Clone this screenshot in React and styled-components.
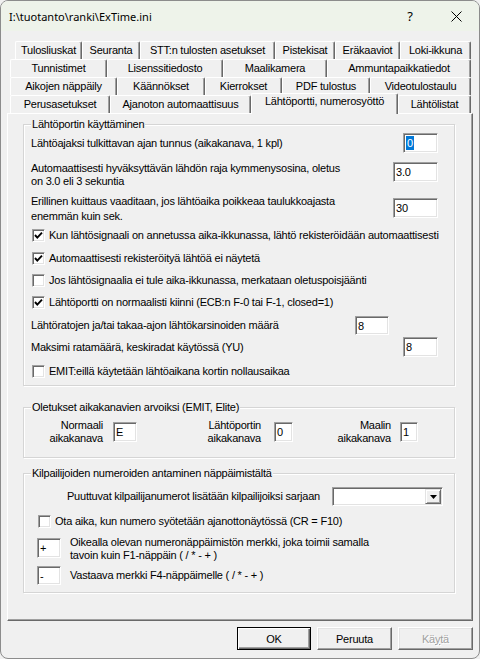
import React from 'react';
import styled, { createGlobalStyle } from 'styled-components';

const GlobalStyle = createGlobalStyle`
  html, body {
    margin: 0;
    padding: 0;
    background: #f0f0f0;
  }
  body {
    font-family: "Liberation Sans", Arial, sans-serif;
    font-size: 11px;
    letter-spacing: -0.22px;
    color: #000;
  }
  * {
    box-sizing: border-box;
  }
`;

const tabRows = [
  {
    indent: 8,
    tabs: [
      ['Tulosliuskat', 67],
      ['Seuranta', 58],
      ['STT:n tulosten asetukset', 135],
      ['Pistekisat', 60],
      ['Eräkaaviot', 65],
      ['Loki-ikkuna', 71],
    ],
  },
  {
    indent: 3,
    tabs: [
      ['Tunnistimet', 97],
      ['Lisenssitiedosto', 116],
      ['Maalikamera', 104],
      ['Ammuntapaikkatiedot', 144],
    ],
  },
  {
    indent: 3,
    tabs: [
      ['Aikojen näppäily', 107],
      ['Käännökset', 88],
      ['Kierrokset', 77],
      ['PDF tulostus', 88],
      ['Videotulostaulu', 101],
    ],
  },
  {
    indent: 3,
    tabs: [
      ['Perusasetukset', 100],
      ['Ajanoton automaattisuus', 141],
      ['Lähtöportti, numerosyöttö', 147, true],
      ['Lähtölistat', 73],
    ],
  },
];

const CheckMark = () => (
  <svg width="11" height="11" viewBox="0 0 11 11">
    <polyline
      points="2,5 4.3,7.6 9,2.6"
      fill="none"
      stroke="#000"
      strokeWidth="1.9"
    />
  </svg>
);

const Check = ({ checked, children, indent = 1 }) => (
  <CheckRow $indent={indent}>
    <CheckBox>{checked && <CheckMark />}</CheckBox>
    <span>{children}</span>
  </CheckRow>
);

const App = () => {
  return (
    <Window>
      <GlobalStyle />
      <TitleBar>
        <Title>I:\tuotanto\ranki\ExTime.ini</Title>
        <CaptionButton>?</CaptionButton>
        <CaptionButton>
          <svg width="11" height="11" viewBox="0 0 11 11">
            <path d="M0.5 0.5 L10.5 10.5 M10.5 0.5 L0.5 10.5" stroke="#000" strokeWidth="1" />
          </svg>
        </CaptionButton>
      </TitleBar>

      <Body>
        <Tabs>
          {tabRows.map((row, i) => (
            <TabRow key={i} $indent={row.indent}>
              {row.tabs.map(([label, w, active]) => (
                <Tab key={label} $w={w} $active={active}>
                  {label}
                </Tab>
              ))}
            </TabRow>
          ))}
        </Tabs>

        <Panel>
          <Group $h={262}>
            <GroupTitle>Lähtöportin käyttäminen</GroupTitle>
            <Row $top={2} $h={20}>
              <Label>Lähtöajaksi tulkittavan ajan tunnus (aikakanava, 1 kpl)</Label>
              <TextBox $w={35} $h={20}>
                <Selected>0</Selected>
              </TextBox>
            </Row>
            <Row $top={9} $h={26} $align="flex-start">
              <Label>
                Automaattisesti hyväksyttävän lähdön raja kymmenysosina, oletus
                <br />
                on 3.0 eli 3 sekuntia
              </Label>
              <TextBox $w={45} $h={20}>3.0</TextBox>
            </Row>
            <Row $top={6} $h={30} $align="flex-start">
              <Label $lh={15}>
                Erillinen kuittaus vaaditaan, jos lähtöaika poikkeaa taulukkoajasta
                <br />
                enemmän kuin sek.
              </Label>
              <TextBox $w={45} $h={20} $mt={4}>30</TextBox>
            </Row>
            <Spacer $h={3} />
            <Check checked>
              Kun lähtösignaali on annetussa aika-ikkunassa, lähtö rekisteröidään automaattisesti
            </Check>
            <Spacer $h={7} />
            <Check checked>Automaattisesti rekisteröityä lähtöä ei näytetä</Check>
            <Spacer $h={6} />
            <Check>Jos lähtösignaalia ei tule aika-ikkunassa, merkataan oletuspoisjäänti</Check>
            <Spacer $h={6} />
            <Check checked>Lähtöportti on normaalisti kiinni (ECB:n F-0 tai F-1, closed=1)</Check>
            <Row $top={6} $h={19}>
              <Label>Lähtöratojen ja/tai takaa-ajon lähtökarsinoiden määrä</Label>
              <TextBox $w={34} $h={19} $mr={49}>8</TextBox>
            </Row>
            <Row $top={2} $h={20}>
              <Label>Maksimi ratamäärä, keskiradat käytössä (YU)</Label>
              <TextBox $w={35} $h={20}>8</TextBox>
            </Row>
            <Spacer $h={6} />
            <Check>EMIT:eillä käytetään lähtöaikana kortin nollausaikaa</Check>
          </Group>

          <Group $h={51} $top={21}>
            <GroupTitle>Oletukset aikakanavien arvoiksi (EMIT, Elite)</GroupTitle>
            <Row $top={5} $h={26} $justify="flex-start">
              <ChannelLabel $w={72}>
                Normaali
                <br />
                aikakanava
              </ChannelLabel>
              <TextBox $w={24} $h={20} $ml={10}>E</TextBox>
              <ChannelLabel $w={124}>
                Lähtöportin
                <br />
                aikakanava
              </ChannelLabel>
              <TextBox $w={19} $h={20} $ml={13}>0</TextBox>
              <ChannelLabel $w={98}>
                Maalin
                <br />
                aikakanava
              </ChannelLabel>
              <TextBox $w={18} $h={20} $ml={9}>1</TextBox>
            </Row>
          </Group>

          <Group $h={120} $top={15} $pr={11}>
            <GroupTitle>Kilpailijoiden numeroiden antaminen näppäimistältä</GroupTitle>
            <Row $top={7} $h={19}>
              <Label $ml={36}>Puuttuvat kilpailijanumerot lisätään kilpailijoiksi sarjaan</Label>
              <Combo>
                <ComboButton>
                  <svg width="7" height="4" viewBox="0 0 7 4">
                    <path d="M0 0 H7 L3.5 4 Z" fill="#000" />
                  </svg>
                </ComboButton>
              </Combo>
            </Row>
            <Spacer $h={7} />
            <Check indent={7}>Ota aika, kun numero syötetään ajanottonäytössä (CR = F10)</Check>
            <Row $top={7} $h={26} $justify="flex-start" $align="flex-start">
              <TextBox $w={24} $h={20} $ml={6} $mt={2}>+</TextBox>
              <Label $ml={9}>
                Oikealla olevan numeronäppäimistön merkki, joka toimii samalla
                <br />
                tavoin kuin F1-näppäin ( / * - + )
              </Label>
            </Row>
            <Row $top={4} $h={19} $justify="flex-start">
              <TextBox $w={24} $h={19} $ml={6}>-</TextBox>
              <Label $ml={9}>Vastaava merkki F4-näppäimelle ( / * - + )</Label>
            </Row>
          </Group>
        </Panel>

        <ButtonBar>
          <Button $w={74} $default>OK</Button>
          <Button $w={75}>Peruuta</Button>
          <Button $w={75} disabled>
            Kä<u>y</u>tä
          </Button>
        </ButtonBar>
      </Body>
    </Window>
  );
};

export default App;

const Window = styled.div`
  display: flex;
  flex-direction: column;
  width: 480px;
  height: 659px;
  border: 1px solid #8c8c8c;
  border-radius: 8px;
  overflow: hidden;
  background: #f0f0f0;
`;

const TitleBar = styled.div`
  display: flex;
  align-items: center;
  height: 30px;
  padding-left: 8px;
  background: #eef3ea;
  font-family: "Noto Sans", "Liberation Sans", sans-serif;
  font-size: 11px;
  letter-spacing: 0;
`;

const Title = styled.div`
  flex: 1;
  white-space: nowrap;
`;

const CaptionButton = styled.div`
  display: flex;
  align-items: center;
  justify-content: center;
  width: 46px;
  height: 30px;
  font-size: 13px;
`;

const Body = styled.div`
  display: flex;
  flex-direction: column;
  flex: 1;
  padding: 0 6px;
`;

const Tabs = styled.div`
  display: flex;
  flex-direction: column;
  margin-top: 10px;
`;

const TabRow = styled.div`
  display: flex;
  align-items: flex-start;
  height: 18px;
  margin-left: ${(p) => p.$indent}px;
`;

const Tab = styled.div`
  position: relative;
  flex: none;
  width: ${(p) => p.$w}px;
  height: ${(p) => (p.$active ? 21 : 18)}px;
  margin-top: ${(p) => (p.$active ? -2 : 0)}px;
  z-index: ${(p) => (p.$active ? 2 : 1)};
  border-top: 1px solid #fff;
  border-left: 1px solid #fff;
  border-right: 1px solid #696969;
  border-radius: 2px 2px 0 0;
  box-shadow: inset -1px 0 #a0a0a0;
  background: #f0f0f0;
  text-align: center;
  line-height: ${(p) => (p.$active ? 15 : 17)}px;
  white-space: nowrap;
`;

const Panel = styled.div`
  display: flex;
  flex-direction: column;
  height: 508px;
  padding: 10px 0 0 15px;
  border-top: 1px solid #fff;
  border-left: 1px solid #fff;
  border-right: 1px solid #696969;
  border-bottom: 1px solid #696969;
  box-shadow: inset -1px -1px #a0a0a0;
`;

const Group = styled.div`
  display: flex;
  flex-direction: column;
  width: 432px;
  height: ${(p) => p.$h}px;
  margin-top: ${(p) => p.$top || 0}px;
  padding: 0 ${(p) => p.$pr || 16}px 0 7px;
  border: 1px solid #d5d5d5;
  box-shadow: inset 1px 1px #fff, 1px 1px #fff;
`;

const GroupTitle = styled.div`
  align-self: flex-start;
  height: 13px;
  margin-top: -7px;
  padding: 0 1px;
  line-height: 13px;
  background: #f0f0f0;
  white-space: nowrap;
`;

const Row = styled.div`
  display: flex;
  justify-content: ${(p) => p.$justify || 'space-between'};
  align-items: ${(p) => p.$align || 'center'};
  height: ${(p) => p.$h}px;
  margin-top: ${(p) => p.$top}px;
`;

const Spacer = styled.div`
  flex: none;
  height: ${(p) => p.$h}px;
`;

const Label = styled.div`
  margin-left: ${(p) => p.$ml || 0}px;
  line-height: ${(p) => p.$lh || 13}px;
  white-space: nowrap;
`;

const ChannelLabel = styled.div`
  flex: none;
  width: ${(p) => p.$w}px;
  line-height: 13px;
  text-align: right;
`;

const TextBox = styled.div`
  flex: none;
  width: ${(p) => p.$w}px;
  height: ${(p) => p.$h}px;
  margin-top: ${(p) => p.$mt || 0}px;
  margin-left: ${(p) => p.$ml || 0}px;
  margin-right: ${(p) => p.$mr || 0}px;
  padding: 2px 0 0 2px;
  border: 1px solid;
  border-color: #a0a0a0 #fff #fff #a0a0a0;
  box-shadow: inset 1px 1px #696969, inset -1px -1px #e3e3e3;
  background: #fff;
  line-height: 14px;
  white-space: nowrap;
`;

const Selected = styled.span`
  display: inline-block;
  padding: 0 1px;
  background: #0078d7;
  color: #fff;
`;

const CheckRow = styled.label`
  display: flex;
  align-items: center;
  gap: 4px;
  height: 16px;
  margin-left: ${(p) => p.$indent}px;
  white-space: nowrap;
`;

const CheckBox = styled.span`
  display: flex;
  align-items: center;
  justify-content: center;
  flex: none;
  width: 13px;
  height: 13px;
  border: 1px solid;
  border-color: #a0a0a0 #fff #fff #a0a0a0;
  box-shadow: inset 1px 1px #696969, inset -1px -1px #e3e3e3;
  background: #fff;
`;

const Combo = styled.div`
  display: flex;
  justify-content: flex-end;
  align-items: center;
  flex: none;
  width: 111px;
  height: 19px;
  padding-right: 1px;
  border: 1px solid;
  border-color: #a0a0a0 #fff #fff #a0a0a0;
  box-shadow: inset 1px 1px #696969, inset -1px -1px #e3e3e3;
  background: #fff;
`;

const ComboButton = styled.div`
  display: flex;
  align-items: center;
  justify-content: center;
  width: 16px;
  height: 15px;
  border: 1px solid;
  border-color: #e3e3e3 #696969 #696969 #e3e3e3;
  box-shadow: inset 1px 1px #fff, inset -1px -1px #a0a0a0;
  background: #f0f0f0;
`;

const ButtonBar = styled.div`
  display: flex;
  justify-content: flex-end;
  gap: 6px;
  margin-top: 6px;
`;

const Button = styled.button`
  width: ${(p) => p.$w}px;
  height: 23px;
  padding: 0;
  border: 1px solid;
  border-color: ${(p) => (p.$default ? '#000' : '#fff #696969 #696969 #fff')};
  box-shadow: ${(p) =>
    p.$default
      ? 'inset 1px 1px #fff, inset -1px -1px #696969, inset -2px -2px #a0a0a0'
      : 'inset -1px -1px #a0a0a0, inset 1px 1px #e3e3e3'};
  background: #f0f0f0;
  font-family: "Liberation Sans", Arial, sans-serif;
  font-size: 11px;
  letter-spacing: -0.22px;
  color: #000;

  &:disabled {
    color: #a0a0a0;
    text-shadow: 1px 1px #fff;
  }

  u {
    text-decoration: underline;
  }
`;
